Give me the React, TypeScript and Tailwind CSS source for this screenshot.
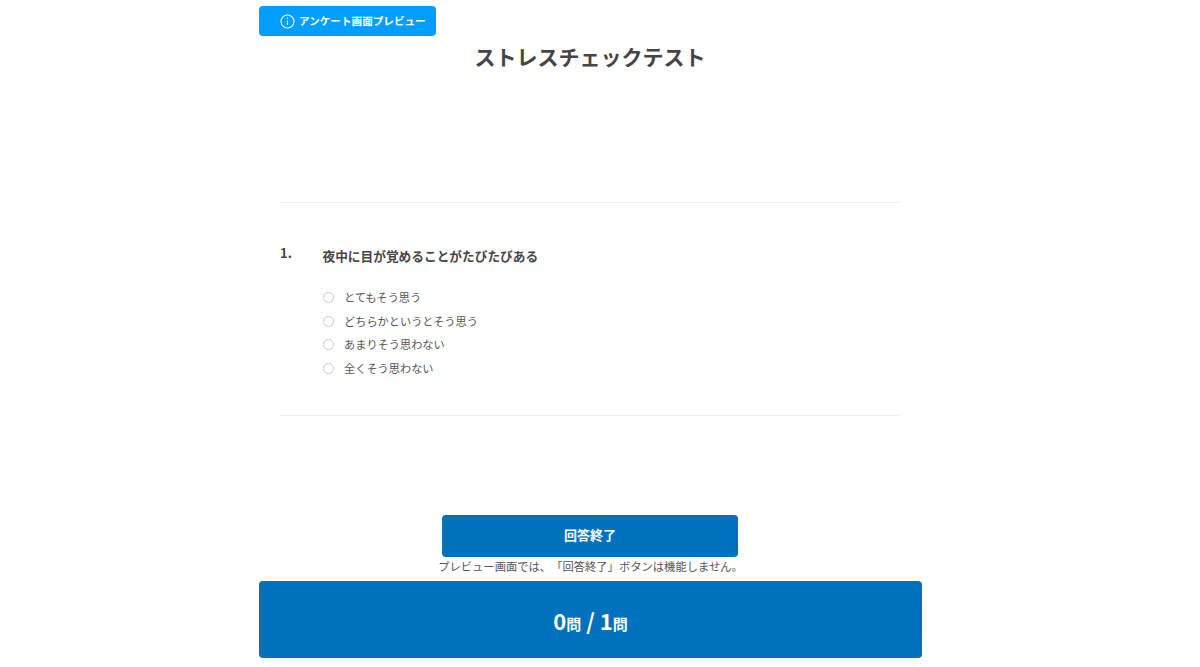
import React from 'react';

const options = ['とてもそう思う', 'どちらかというとそう思う', 'あまりそう思わない', '全くそう思わない'];

export default function App() {
  return (
    <div className="h-[667px] w-[1200px] overflow-hidden bg-white font-['Noto_Sans_CJK_JP','Noto_Sans',sans-serif] text-[#454545] [text-spacing-trim:space-all]">
      <div className="ml-[259px] flex w-[663px] flex-col pt-[6px]">
        {/* Preview badge */}
        <div className="flex h-[30px] w-[177px] items-center rounded-[4px] bg-[#009fff] pl-[21px] text-white">
          <svg width="15" height="15" viewBox="0 0 15 15" fill="none" stroke="currentColor" className="shrink-0">
            <circle cx="7.5" cy="7.5" r="6.5" strokeWidth="1.1" />
            <path d="M7.5 6.5v4.5M7.5 3.6v1.4" strokeWidth="1.1" />
          </svg>
          <span className="ml-[4px] text-[10.6px] leading-none font-bold whitespace-nowrap">アンケート画面プレビュー</span>
        </div>

        {/* Title */}
        <h1 className="mt-[4px] mr-[1px] text-center text-[21px] leading-[32px] font-bold">ストレスチェックテスト</h1>

        {/* Question */}
        <div className="mt-[130px] mr-[22px] ml-[21px] h-[214px] border-y border-[#eeeeee] pt-[42px]">
          <div className="flex">
            <span className="w-[42.5px] text-[13px] leading-[18px] font-bold -translate-y-px">1.</span>
            <div className="flex flex-col">
              <p className="mt-[2px] text-[12.7px] leading-[18px] font-bold">夜中に目が覚めることがたびたびある</p>
              <ul className="mt-[21px] flex flex-col">
                {options.map((label) => (
                  <li key={label} className="flex h-[23.5px] items-center">
                    <span className="h-[11px] w-[11px] rounded-full border border-[#c8c8c8]" />
                    <span className="ml-[10.5px] text-[11.2px] leading-none text-[#555555]">{label}</span>
                  </li>
                ))}
              </ul>
            </div>
          </div>
        </div>

        {/* Submit */}
        <button className="mt-[99px] ml-[183px] h-[42px] w-[296px] rounded-[4px] bg-[#0071bc] pb-[2px] text-[13px] font-bold text-white">
          回答終了
        </button>
        <p className="mt-[1px] text-center text-[11.3px] leading-[16px] whitespace-nowrap text-[#555555]">
          プレビュー画面では、「回答終了」ボタンは機能しません。
        </p>

        {/* Progress */}
        <div className="mt-[7px] flex h-[77px] items-center justify-center rounded-[4px] bg-[#0071bc] font-bold text-white">
          <div className="flex items-baseline">
            <span className="text-[22px] leading-none">0</span>
            <span className="text-[15px] leading-none">問</span>
            <span className="mx-[5px] text-[22px] leading-none">/</span>
            <span className="text-[22px] leading-none">1</span>
            <span className="text-[15px] leading-none">問</span>
          </div>
        </div>
      </div>
    </div>
  );
}
